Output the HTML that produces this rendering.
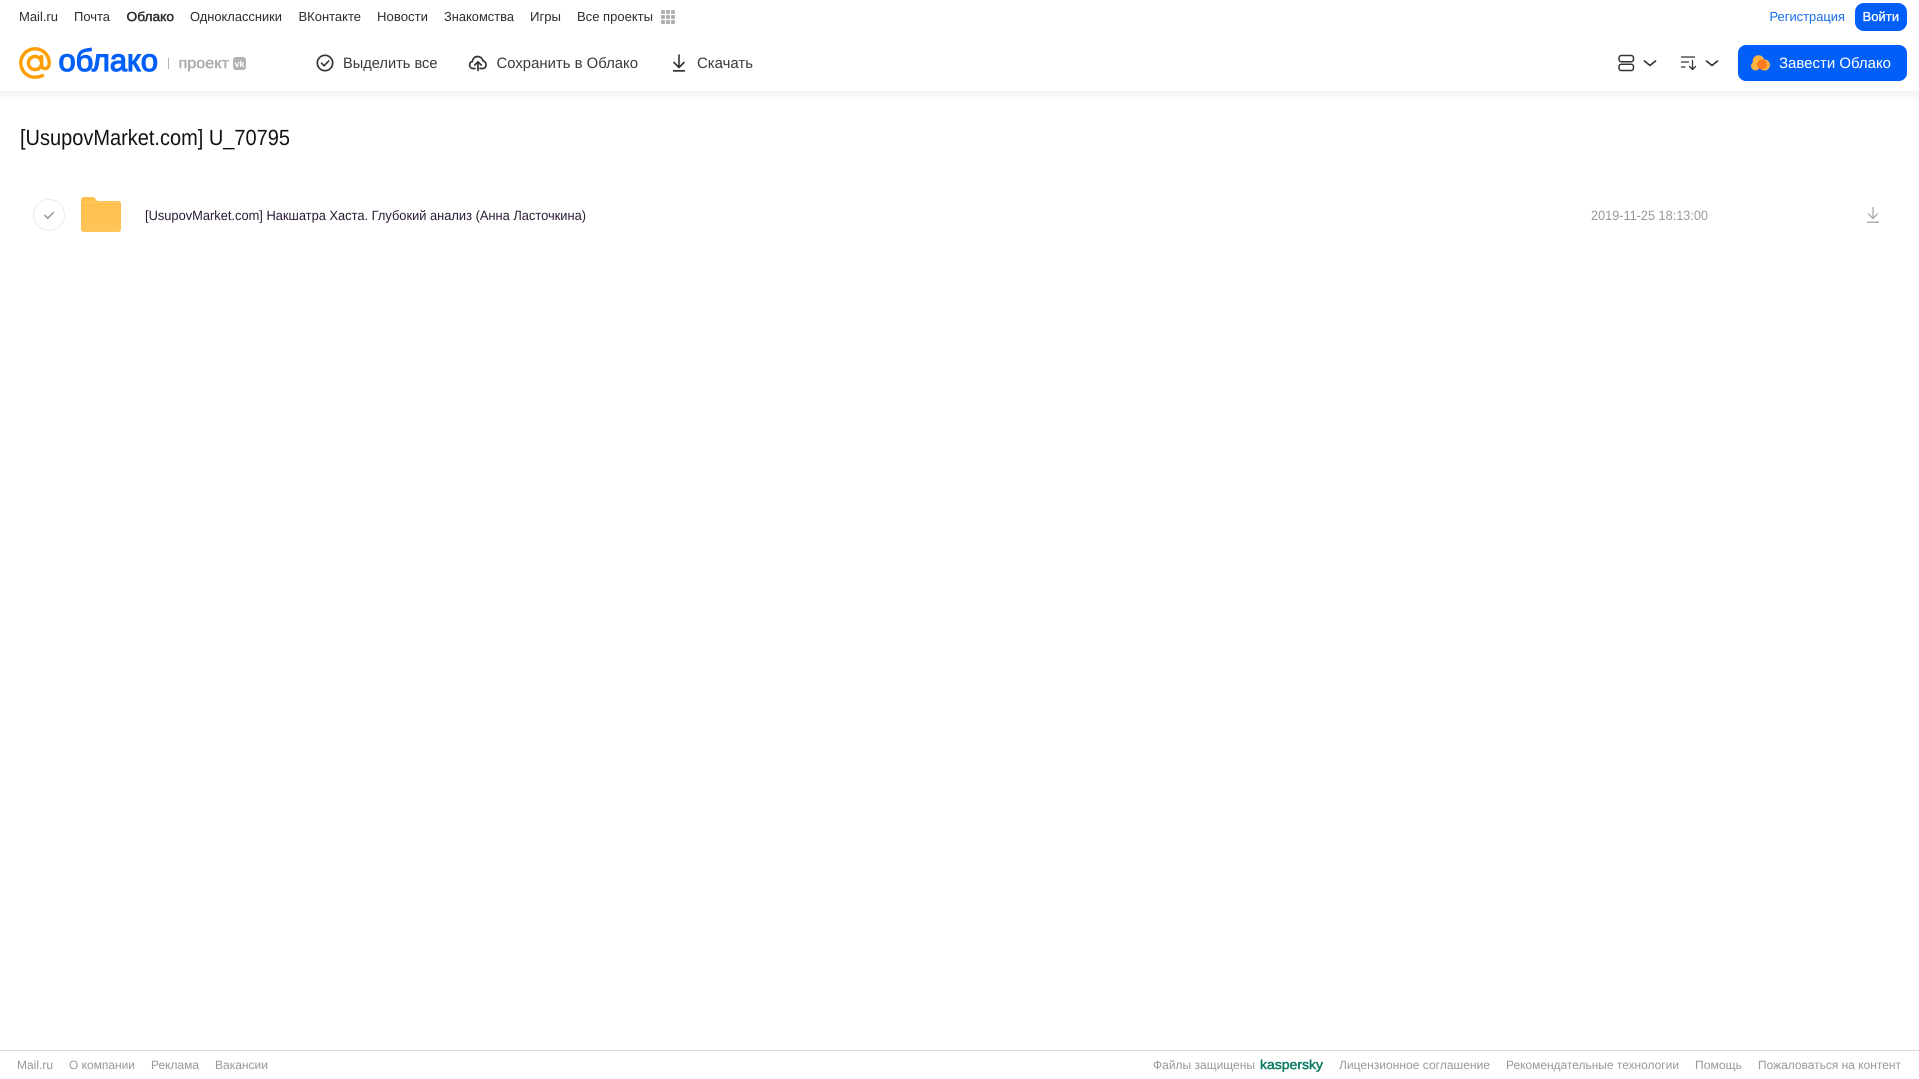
<!DOCTYPE html>
<html lang="ru">
<head>
<meta charset="utf-8">
<title>Облако</title>
<style>
html,body{margin:0;padding:0;background:#fff;width:1919px;height:1079px;overflow:hidden}
svg{display:block;position:absolute;left:0;top:0}
text{font-family:"Liberation Sans","Noto Sans CJK SC",sans-serif}
.n{font-size:13px;fill:#2c2d2e}
.a{font-size:15px;fill:#3a3a3a}
.f{font-size:12px;fill:#999}
</style>
</head>
<body>
<svg width="1919" height="1079" viewBox="0 0 1919 1079" xmlns="http://www.w3.org/2000/svg" text-rendering="geometricPrecision">
<defs>
<linearGradient id="sh" x1="0" y1="0" x2="0" y2="1"><stop offset="0" stop-color="#f3f3f3"/><stop offset="1" stop-color="#fff"/></linearGradient>
<linearGradient id="fo" x1="0" y1="0" x2="0" y2="1"><stop offset="0" stop-color="#ffbf4a"/><stop offset="1" stop-color="#ffc558"/></linearGradient>
</defs>
<rect x="0" y="91" width="1919" height="10" fill="url(#sh)"/>

<!-- top nav -->
<text class="n" x="19" y="21" textLength="39" lengthAdjust="spacingAndGlyphs">Mail.ru</text>
<text class="n" x="74" y="21" textLength="36" lengthAdjust="spacingAndGlyphs">Почта</text>
<text class="n" x="126.500" y="21" textLength="47.500" lengthAdjust="spacingAndGlyphs" stroke="#2c2d2e" stroke-width=".45">Облако</text>
<text class="n" x="190" y="21" textLength="92" lengthAdjust="spacingAndGlyphs">Одноклассники</text>
<text class="n" x="298.500" y="21" textLength="62.500" lengthAdjust="spacingAndGlyphs">ВКонтакте</text>
<text class="n" x="377" y="21" textLength="51" lengthAdjust="spacingAndGlyphs">Новости</text>
<text class="n" x="444" y="21" textLength="70" lengthAdjust="spacingAndGlyphs">Знакомства</text>
<text class="n" x="530" y="21" textLength="31" lengthAdjust="spacingAndGlyphs">Игры</text>
<text class="n" x="577" y="21" textLength="76" lengthAdjust="spacingAndGlyphs">Все проекты</text>
<g fill="#b0b0b0">
<rect x="661" y="10" width="4" height="4" rx="1"/><rect x="666" y="10" width="4" height="4" rx="1"/><rect x="671" y="10" width="4" height="4" rx="1"/>
<rect x="661" y="15" width="4" height="4" rx="1"/><rect x="666" y="15" width="4" height="4" rx="1"/><rect x="671" y="15" width="4" height="4" rx="1"/>
<rect x="661" y="20" width="4" height="4" rx="1"/><rect x="666" y="20" width="4" height="4" rx="1"/><rect x="671" y="20" width="4" height="4" rx="1"/>
</g>
<text x="1769.500" y="21" font-size="13" fill="#1a6fe8" textLength="75.500" lengthAdjust="spacingAndGlyphs">Регистрация</text>
<rect x="1855" y="3" width="52" height="28" rx="9" fill="#005ff9"/>
<text x="1862.500" y="21" font-size="13" fill="#fff" stroke="#fff" stroke-width=".3" textLength="36.500" lengthAdjust="spacingAndGlyphs">Войти</text>

<!-- logo -->
<g fill="none" stroke="#ff9e00" stroke-width="3.400" stroke-linecap="round">
<circle cx="35" cy="63" r="6.600"/>
<path d="M42.500 75.600C40.400 76.600 37.800 77.200 35 77.200 27.200 77.200 20.800 70.800 20.800 63S27.200 48.800 35 48.800 49.200 55.200 49.200 63C49.200 66.600 47.400 68.600 45 68.600 42.800 68.600 41.600 67 41.600 64.600V56.600"/>
</g>
<text x="58.500" y="71" font-size="31" fill="#005ff9" stroke="#005ff9" stroke-width="1.200" textLength="99.500" lengthAdjust="spacingAndGlyphs">облако</text>
<rect x="168" y="58" width="1" height="11" fill="#b5b5b5"/>
<text x="178.500" y="68" font-size="15" fill="#a9abaf" stroke="#a9abaf" stroke-width=".45" textLength="50.500" lengthAdjust="spacingAndGlyphs">проект</text>
<rect x="233" y="57" width="13" height="13" rx="3" fill="#b3b3b3"/>
<text x="234.500" y="67" font-size="9" font-weight="700" fill="#fff" textLength="10" lengthAdjust="spacingAndGlyphs">vk</text>

<!-- actions -->
<circle cx="325" cy="63" r="7.700" fill="none" stroke="#333" stroke-width="1.700"/>
<path d="M321.500 63.200l2.600 2.600 4.600-4.800" fill="none" stroke="#333" stroke-width="1.600" stroke-linecap="round" stroke-linejoin="round"/>
<text class="a" x="343" y="68" textLength="94.500" lengthAdjust="spacingAndGlyphs">Выделить все</text>

<path d="M475 68.500h-2c-2.200 0-3.400-1.700-3.400-3.500 0-1.800 1.100-3.200 2.700-3.500.4-3 2.600-5 5.300-5s4.900 1.900 5.300 4.400c1.800.2 3.200 1.900 3.200 3.900 0 2-1.400 3.700-3.400 3.700H480" fill="none" stroke="#333" stroke-width="1.700" stroke-linecap="round" stroke-linejoin="round"/>
<path d="M478 70.500v-8M474.800 65l3.200-3.200 3.200 3.200" fill="none" stroke="#333" stroke-width="1.700" stroke-linecap="round" stroke-linejoin="round"/>
<text class="a" x="496.500" y="68" textLength="141.500" lengthAdjust="spacingAndGlyphs">Сохранить в Облако</text>

<path d="M679 55v12M674 62.500l5 5 5-5" fill="none" stroke="#333" stroke-width="1.600" stroke-linecap="round" stroke-linejoin="round"/>
<rect x="673" y="70" width="12" height="1.700" fill="#333"/>
<text class="a" x="697" y="68" textLength="56" lengthAdjust="spacingAndGlyphs">Скачать</text>

<!-- right controls -->
<rect x="1619" y="55.500" width="14.500" height="6.300" rx="2.400" fill="none" stroke="#333" stroke-width="1.500"/>
<rect x="1619" y="64.200" width="14.500" height="6.300" rx="2.400" fill="none" stroke="#333" stroke-width="1.500"/>
<path d="M1644.500 61l5.500 4.500 5.500-4.500" fill="none" stroke="#333" stroke-width="1.700" stroke-linecap="round" stroke-linejoin="round"/>
<path d="M1681.500 57h13M1681.500 62h7M1681.500 67h3.500M1692.500 60.500v9M1689.500 66.500l3 3 3-3" fill="none" stroke="#333" stroke-width="1.300" stroke-linecap="round" stroke-linejoin="round"/>
<path d="M1706.500 61l5.500 4.500 5.500-4.500" fill="none" stroke="#333" stroke-width="1.700" stroke-linecap="round" stroke-linejoin="round"/>

<rect x="1738" y="45" width="169" height="36" rx="8" fill="#005ff9"/>
<g fill="#ffb340">
<circle cx="1755.500" cy="66" r="4.500"/>
<circle cx="1758.500" cy="61" r="5.800"/>
<circle cx="1764.500" cy="65" r="5.500"/>
</g>
<circle cx="1762" cy="64.500" r="5" fill="#ff7a1f"/>
<text x="1779" y="68" font-size="15" fill="#fff" textLength="112" lengthAdjust="spacingAndGlyphs">Завести Облако</text>

<!-- heading -->
<text x="20" y="145" font-size="22" fill="#111" textLength="270" lengthAdjust="spacingAndGlyphs">[UsupovMarket.com] U_70795</text>

<!-- row -->
<circle cx="49" cy="215" r="15.500" fill="#fff" stroke="#ececec" stroke-width="1"/>
<path d="M44.800 215.300l3 3 5.500-5.700" fill="none" stroke="#999" stroke-width="1.500" stroke-linecap="round" stroke-linejoin="round"/>
<path d="M81 200c0-1.700 1.300-3 3-3h8c1.500 0 2.500.6 3.500 1.800l1.700 2.200H118c1.700 0 3 1.300 3 3v25c0 1.700-1.300 3-3 3H84c-1.700 0-3-1.300-3-3z" fill="url(#fo)"/>
<rect x="81" y="202" width="40" height="1" fill="#ffcf78" opacity=".7"/>
<text x="145" y="220" font-size="13.500" fill="#2a1a33" textLength="441" lengthAdjust="spacingAndGlyphs">[UsupovMarket.com] Накшатра Хаста. Глубокий анализ (Анна Ласточкина)</text>
<text x="1591" y="220" font-size="13.500" fill="#999" textLength="117" lengthAdjust="spacingAndGlyphs">2019-11-25 18:13:00</text>
<path d="M1873 207.500v11M1868.500 214l4.500 4.500 4.500-4.500" fill="none" stroke="#a9a9a9" stroke-width="1.300" stroke-linecap="round" stroke-linejoin="round"/>
<rect x="1867" y="221.500" width="12" height="1.400" fill="#a9a9a9"/>

<!-- footer -->
<rect x="0" y="1050" width="1919" height="1" fill="#dcdcdc"/>
<text class="f" x="17" y="1069" textLength="36" lengthAdjust="spacingAndGlyphs">Mail.ru</text>
<text class="f" x="69" y="1069" textLength="66" lengthAdjust="spacingAndGlyphs">О компании</text>
<text class="f" x="151" y="1069" textLength="48" lengthAdjust="spacingAndGlyphs">Реклама</text>
<text class="f" x="215" y="1069" textLength="53" lengthAdjust="spacingAndGlyphs">Вакансии</text>
<text class="f" x="1153" y="1069" textLength="102" lengthAdjust="spacingAndGlyphs">Файлы защищены</text>
<text x="1260" y="1069" font-size="13" fill="#0b7a63" stroke="#0b7a63" stroke-width=".45" textLength="63" lengthAdjust="spacingAndGlyphs">kaspersky</text>
<text class="f" x="1339" y="1069" textLength="151" lengthAdjust="spacingAndGlyphs">Лицензионное соглашение</text>
<text class="f" x="1506" y="1069" textLength="173" lengthAdjust="spacingAndGlyphs">Рекомендательные технологии</text>
<text class="f" x="1695" y="1069" textLength="47" lengthAdjust="spacingAndGlyphs">Помощь</text>
<text class="f" x="1758" y="1069" textLength="143" lengthAdjust="spacingAndGlyphs">Пожаловаться на контент</text>
</svg>
</body>
</html>
